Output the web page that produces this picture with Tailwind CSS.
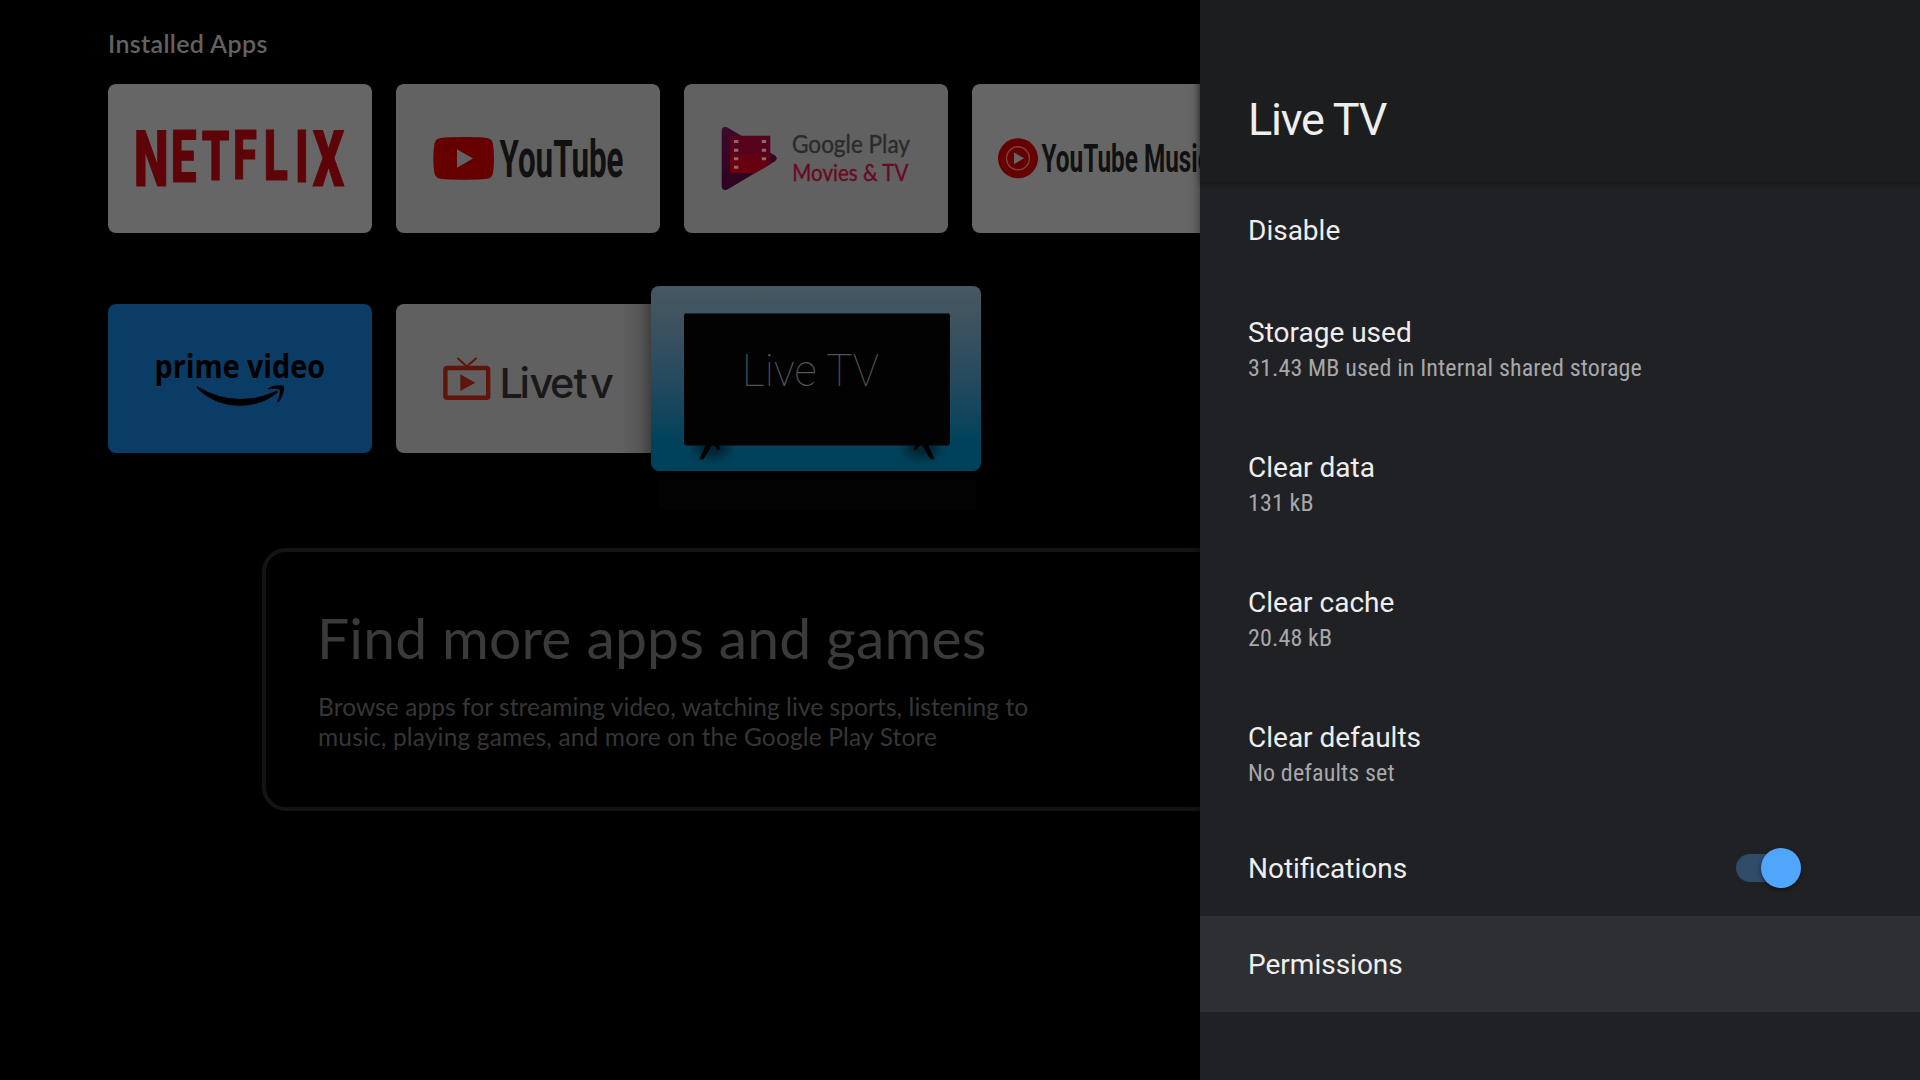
<!DOCTYPE html>
<html lang="en">
<head>
<meta charset="utf-8">
<title>Live TV</title>
<script src="https://cdn.jsdelivr.net/npm/@tailwindcss/browser@4"></script>
</head>
<body class="relative flex h-[1080px] w-[1920px] overflow-hidden bg-black font-[Roboto,sans-serif]">

<!-- Home screen, dimmed behind the panel -->
<main class="flex h-full w-[1200px] shrink-0 flex-col overflow-hidden pl-[108px] pt-[27px]">
  <h2 class="h-8 text-[25px] leading-8 font-semibold tracking-[0.35px] text-[#626262] font-[Lato,sans-serif]">Installed Apps</h2>

  <div class="mt-[25px] flex gap-6">
    <!-- Netflix -->
    <svg class="h-[149px] w-[264px] shrink-0 rounded-lg bg-[#666666]" viewBox="0 0 264 149">
      <text transform="scale(0.64 1)" font-family="Roboto, sans-serif" font-weight="900" fill="#5e0408" stroke="#5e0408" stroke-width="1"><tspan x="40.5" y="102" font-size="77">N</tspan><tspan x="98" y="98" font-size="72">E</tspan><tspan x="146.5" y="96" font-size="69">T</tspan><tspan x="195.5" y="95.5" font-size="68">F</tspan><tspan x="243.5" y="96.5" font-size="69.5">L</tspan><tspan x="292" y="98" font-size="71.5">I</tspan><tspan x="320" y="102" font-size="77">X</tspan></text>
    </svg>
    <!-- YouTube -->
    <svg class="h-[149px] w-[264px] shrink-0 rounded-lg bg-[#626262]" viewBox="0 0 264 149">
      <path d="M67.7 53C79 53 86 53.3 91 54Q96 54.7 97 60Q98 67 98 74.4T97 89Q96 94 91 94.8Q82 95.7 67.7 95.7T44.5 94.8Q39.5 94 38.4 89Q37.3 82 37.3 74.4T38.4 60Q39.5 54.7 44.5 54Q53 53 67.7 53Z" fill="#660000"/>
      <path d="M61 65.3V83.7L77 74.5Z" fill="#626262"/>
      <text x="103.5" y="92.5" textLength="124" lengthAdjust="spacingAndGlyphs" font-family="Roboto, sans-serif" font-size="51" font-weight="700" fill="#111111">YouTube</text>
    </svg>
    <!-- Google Play Movies & TV -->
    <svg class="h-[149px] w-[264px] shrink-0 rounded-lg bg-[#616161]" viewBox="0 0 264 149">
      <defs>
        <linearGradient id="tri" x1="0" y1="0" x2="0" y2="1"><stop offset="0" stop-color="#3d0a2a"/><stop offset="1" stop-color="#2b0320"/></linearGradient>
        <linearGradient id="film" x1="1" y1="0" x2="0" y2="1"><stop offset="0" stop-color="#5c0216"/><stop offset="1" stop-color="#72000a"/></linearGradient>
      </defs>
      <path d="M37.7 46.5Q38 42 43 43.3L91 71.5Q94.5 74.3 91 77.2L43 105.7Q38 107 37.7 102.5Z" fill="url(#tri)"/>
      <path d="M46 51.7H86.3V70H46Z" fill="#56021c"/>
      <path d="M46 70H86.3V80.3L71.5 89H46Z" fill="url(#film)"/>
      <g fill="#8b6a70"><path d="M50 56h4.3v3H50zM50 64.7h4.3v3H50zM50 73.2h4.3v3H50zM50 81.7h4.3v3H50zM77.8 56h4.3v3h-4.3zM77.8 64.7h4.3v3h-4.3zM77.8 73.2h4.3v3h-4.3z"/></g>
      <text x="108" y="69" textLength="118" lengthAdjust="spacingAndGlyphs" font-family="Lato, sans-serif" font-size="25" fill="#2b2b2b" stroke="#2b2b2b" stroke-width="0.4">Google Play</text>
      <text x="108.3" y="97.4" textLength="116" lengthAdjust="spacingAndGlyphs" font-family="Lato, sans-serif" font-size="23" fill="#680a22" stroke="#680a22" stroke-width="0.4">Movies &amp; TV</text>
    </svg>
    <!-- YouTube Music -->
    <svg class="h-[149px] w-[264px] shrink-0 rounded-lg bg-[#666666]" viewBox="0 0 264 149">
      <circle cx="46" cy="74.3" r="20" fill="#660000"/>
      <circle cx="46" cy="74.3" r="11.5" fill="none" stroke="#7a4444" stroke-width="1.4"/>
      <path d="M42 68.5V80.2L52 74.3Z" fill="#666666"/>
      <text x="69.5" y="88" textLength="169" lengthAdjust="spacingAndGlyphs" font-family="Roboto, sans-serif" font-size="38" font-weight="700" fill="#111111">YouTube Music</text>
    </svg>
  </div>

  <div class="relative mt-[71px] flex gap-6">
    <!-- Prime Video -->
    <svg class="h-[149px] w-[264px] shrink-0 rounded-lg bg-[#0a3c66]" viewBox="0 0 264 149">
      <text x="46.5" y="74" textLength="170.5" lengthAdjust="spacingAndGlyphs" font-family="Open Sans, Noto Sans, sans-serif" font-size="32" font-weight="700" fill="#000">prime video</text>
      <path d="M89 82.3Q110 95 132.5 95Q151 95 167 87.3Q170.5 86.3 170 88.3Q154 101.8 132.5 101.8Q107 101.8 89.5 84.8Q88 82.5 89 82.3Z" fill="#000"/>
      <path d="M159.7 84.5Q166 80.5 175 81.4Q177 82 175.5 88Q173.5 95.5 170 98.3Q168.8 98.8 169.3 97Q172.5 89.5 171.8 86Q169 84 160.5 85.3Q159 85.5 159.7 84.5Z" fill="#000"/>
    </svg>
    <!-- Livetv -->
    <svg class="h-[149px] w-[264px] shrink-0 rounded-lg bg-[#606060]" viewBox="0 0 264 149">
      <defs><linearGradient id="edge" x1="0" x2="1"><stop offset="0" stop-color="#000" stop-opacity="0"/><stop offset="0.6" stop-color="#000" stop-opacity="0.1"/><stop offset="1" stop-color="#000" stop-opacity="0.35"/></linearGradient></defs>
      <g fill="none" stroke="#5f150c">
        <rect x="49.4" y="64" width="42.8" height="29.7" rx="1.8" stroke-width="4.4"/>
        <path d="M62 54.5L70.7 62.5L80 54.5" stroke-width="2" stroke-linecap="round"/>
      </g>
      <path d="M64.3 70.3V87L79.3 78.7Z" fill="#5f150c"/>
      <text y="94" x="103.5 123.5 133.5 154 177.5 194" font-family="Inter, sans-serif" font-size="41.5" font-weight="500" fill="#191919">Livetv</text>
      <rect x="225" width="31" height="149" fill="url(#edge)"/>
    </svg>
    <!-- Focused tile, enlarged over its neighbour -->
    <div class="absolute -top-[18px] left-[543px] h-[223px] w-[330px]">
      <div class="absolute left-2 top-[194px] h-[29px] w-[317px] bg-[#030303]"></div>
      <svg class="relative h-[185px] w-[330px] rounded-lg" viewBox="0 0 330 185">
        <defs>
          <linearGradient id="wall" x1="0" y1="0" x2="0" y2="1"><stop offset="0" stop-color="#465862"/><stop offset="0.15" stop-color="#3f545f"/><stop offset="0.5" stop-color="#264a5e"/><stop offset="0.85" stop-color="#00425b"/><stop offset="1" stop-color="#00415a"/></linearGradient>
          <filter id="soft" x="-50%" y="-50%" width="200%" height="200%"><feGaussianBlur stdDeviation="5"/></filter>
        </defs>
        <rect width="330" height="185" fill="url(#wall)"/>
        <g fill="#000" opacity="0.45" filter="url(#soft)"><ellipse cx="61" cy="162" rx="17" ry="10"/><ellipse cx="271" cy="162" rx="17" ry="10"/></g>
        <rect x="33" y="27" width="266" height="132.5" rx="3" fill="#020202"/>
        <rect x="34" y="27" width="264" height="1" fill="#16282f"/>
        <g fill="#000"><path d="M55 158.5L48.5 173.2H52.5L61.5 158.5ZM62.5 158.5L66.5 164L69.5 163.3L67.5 158.5Z"/><path d="M277 158.5L283.5 173.2H279.5L270.5 158.5ZM269.5 158.5L265.5 164L262.5 163.3L264.5 158.5Z"/></g>
        <text x="91" y="100" textLength="137" lengthAdjust="spacingAndGlyphs" font-family="Roboto, sans-serif" font-size="45" font-weight="100" fill="#545454">Live TV</text>
      </svg>
    </div>
  </div>

  <!-- Store banner, runs on under the panel -->
  <section class="ml-[154px] mt-[95px] h-[263px] w-[1396px] shrink-0 rounded-3xl border-4 border-[#131515] pl-[51px] pt-[51px] font-[Lato,sans-serif]">
    <h3 class="h-[68px] whitespace-nowrap text-[57px] leading-[68px] tracking-[0.18px] text-[#3a3a3a]">Find more apps and games</h3>
    <p class="mt-[21px] whitespace-nowrap pl-px text-[24.5px] leading-[30px] text-[#363636]"><span class="tracking-[0.07px]">Browse apps for streaming video, watching live sports, listening to</span><br><span class="tracking-[0.16px]">music, playing games, and more on the Google Play Store</span></p>
  </section>
</main>

<!-- Settings panel -->
<aside class="relative flex h-full w-[720px] shrink-0 flex-col bg-[#202124] text-[#eeeeee] shadow-[0_0_10px_rgba(0,0,0,0.5)]">
  <header class="z-10 flex h-[182px] shrink-0 items-end bg-[#1b1d1e] pb-9 pl-12 shadow-[0_1px_5px_rgba(0,0,0,0.4)]">
    <h1 class="text-[45px] leading-[53px] tracking-[-1.2px]">Live TV</h1>
  </header>
  <ul class="flex flex-col text-[28px] leading-8">
    <li class="flex h-24 items-center pl-12 pt-0.5">Disable</li>
    <li class="flex h-[135px] flex-col justify-center pl-12 pt-[9px]"><span class="mt-px">Storage used</span><span class="mt-[3px] text-2xl leading-8 tracking-[0.14px] text-[#a7a8aa] [font-stretch:75%]">31.43 MB used in Internal shared storage</span></li>
    <li class="flex h-[135px] flex-col justify-center pl-12 pt-[9px]"><span class="mt-px">Clear data</span><span class="mt-[3px] text-2xl leading-8 tracking-[0.14px] text-[#a7a8aa] [font-stretch:75%]">131 kB</span></li>
    <li class="flex h-[135px] flex-col justify-center pl-12 pt-[9px]"><span class="mt-px">Clear cache</span><span class="mt-[3px] text-2xl leading-8 tracking-[0.14px] text-[#a7a8aa] [font-stretch:75%]">20.48 kB</span></li>
    <li class="flex h-[135px] flex-col justify-center pl-12 pt-[9px]"><span class="mt-px">Clear defaults</span><span class="mt-[3px] text-2xl leading-8 tracking-[0.14px] text-[#a7a8aa] [font-stretch:75%]">No defaults set</span></li>
    <li class="mt-0.5 flex h-24 items-center justify-between pl-12 pr-[119px]"><span class="pt-0.5">Notifications</span>
      <span class="flex h-7 w-[65px] items-center justify-end rounded-full bg-gradient-to-r from-[#2f4b68] from-80% to-transparent to-80%"><span class="size-10 shrink-0 rounded-full bg-[#4fa6fb] shadow-[0_2px_4px_rgba(0,0,0,0.45)]"></span></span>
    </li>
    <li class="flex h-24 items-center bg-[#2e2f33] pl-12 pt-0.5">Permissions</li>
  </ul>
</aside>
</body>
</html>
